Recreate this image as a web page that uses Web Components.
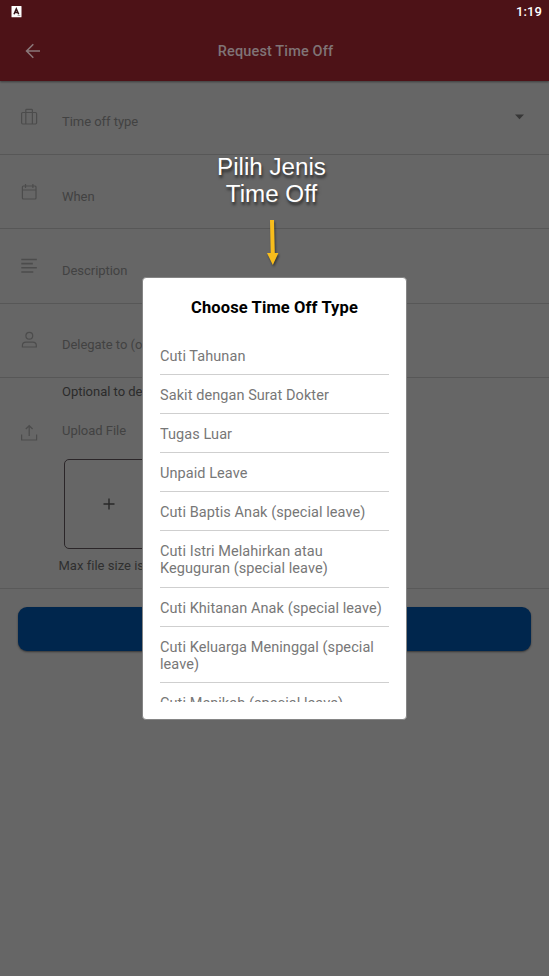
<!DOCTYPE html>
<html lang="id">
<head>
<meta charset="utf-8">
<title>Request Time Off</title>
<style>
html,body{margin:0;height:100%;overflow:hidden;background:#666}
body{font-family:Roboto,sans-serif}
</style>
</head>
<body>
<time-off-screen></time-off-screen>
<script>
const define=(name,html)=>{
  const t=document.createElement('template');
  t.innerHTML=html;
  customElements.define(name,class extends HTMLElement{
    constructor(){super();this.attachShadow({mode:'open'}).append(t.content.cloneNode(true));}
  });
};

define('app-header',`<style>
:host{display:flex;flex-direction:column;height:80.6px;background:#4d1217;color:#8a7779;box-shadow:0 1px 2px #0006;position:relative}
.status{display:flex;justify-content:space-between;height:22px;padding:1px 7px 0 11px;align-items:center;box-sizing:border-box;color:#fff;font-size:13px;font-weight:500;letter-spacing:.1px}
.bar{display:grid;grid-template-columns:66px 1fr 64px;height:58.6px;align-items:center}
.bar svg{margin-left:25px}
h1{margin:0;padding-top:1px;text-align:center;font-size:14.5px;font-weight:500;letter-spacing:.13px;color:#807476}
.status svg{display:block}
</style>
<div class="status"><svg width="11" height="12" viewBox="0 0 11 12"><rect x=".5" width="10" height="11.3" rx=".6" fill="#fff"/><path d="M3 8.2 5.3 2.9 7.7 8.2M3.8 6.5h3" fill="none" stroke="#36161a" stroke-width="1.5"/><path d="M6.5 9.5h2.8" stroke="#aaa"/></svg><span>1:19</span></div>
<div class="bar"><svg width="16" height="16" viewBox="0 0 16 16" fill="none" stroke="#8a7779" stroke-width="1.6"><path d="M15 8H2M8.3 1.3 1.6 8l6.7 6.7"/></svg><h1><slot></slot></h1></div>`);

define('form-row',`<style>
:host{display:grid;grid-template-columns:62px 1fr auto;height:74.35px;box-sizing:border-box;border-bottom:1px solid #575757;font-size:13px;color:#424242;letter-spacing:-.04px;align-items:center}
.icon{padding-left:20px;display:flex}
.label{padding-top:9px}
.end{padding-right:24px}
</style><span class="icon"><slot name="icon"></slot></span><span class="label"><slot></slot></span><span class="end"><slot name="end"></slot></span>`);

define('upload-section',`<style>
:host{display:flex;flex-direction:column;height:211px;box-sizing:border-box;border-bottom:1px solid #595959;font-size:13px;color:#424242;letter-spacing:-.02px;line-height:16px}
.hint{padding:6px 0 0 62px;color:#2b2b2b}
.head{display:grid;grid-template-columns:62px 1fr;height:34px;margin-top:14px;align-items:center}
.icon{padding:4px 0 0 20px;display:flex}
.head span:last-child{margin-top:3px;padding-bottom:2px}
.drop{margin:11px 0 0 64px;width:90px;height:90px;box-sizing:border-box;border:1px solid #2b2629;border-radius:5px;display:grid;place-items:center}
.note{padding:9px 0 0 58.5px;color:#2f2f2f;letter-spacing:.02px}
</style><div class="hint"><slot name="hint"></slot></div>
<div class="head"><span class="icon"><slot name="icon"></slot></span><span><slot></slot></span></div>
<div class="drop"><svg width="12" height="12" viewBox="0 0 12 12"><path d="M6 .5v11M.5 6h11" stroke="#292929" stroke-width="1.4"/></svg></div>
<div class="note"><slot name="note"></slot></div>`);

define('submit-button',`<style>
:host{display:block;margin:18px 18px 0;height:44px;border-radius:9px;background:#00264d;box-shadow:0 1px 2px #0007}
</style>`);

define('choice-item',`<style>
:host{display:block;flex:none;padding:12px 0 9.1px;border-bottom:1px solid #cfcfcf;line-height:17px;font-size:14.5px;color:#777;letter-spacing:.07px}
</style><slot></slot>`);

define('choice-dialog',`<style>
:host{position:absolute;left:142px;top:277px;width:265px;height:443px;box-sizing:border-box;display:flex;flex-direction:column;background:#fff;border:1px solid #858585;border-radius:4px;padding:0 17px 17px}
h2{margin:0;height:58px;line-height:59px;text-align:center;font-size:16.5px;letter-spacing:.12px;font-weight:700;color:#000;flex:none}
.list{display:flex;flex-direction:column;overflow:hidden;flex:1;min-height:0}
</style><h2><slot name="title"></slot></h2><div class="list"><slot></slot></div>`);

define('callout-note',`<style>
:host{position:absolute;left:201.5px;top:153px;width:140px;display:flex;flex-direction:column;align-items:center;font:24.2px/27px "Liberation Sans",sans-serif;color:#fff;text-align:center;text-shadow:1px 3px 3px #0009}
svg{margin:11px 0 0 1px;filter:drop-shadow(1px 2px 1px #0007)}
</style><div><slot></slot></div><svg width="14" height="48" viewBox="0 0 14 48"><path d="M5 2h4l.8 33h3.6L7.8 47 2 35h3.7z" fill="#f8bd1c"/></svg>`);

define('time-off-screen',`<style>
:host{display:flex;flex-direction:column;height:100vh;background:#666;position:relative;overflow:hidden}
svg{display:block}
.line{fill:none;stroke:#4c4c4c;stroke-width:1.2}
</style>
<app-header>Request Time Off</app-header>
<form-row>
<svg slot="icon" class="line" width="18" height="18" viewBox="0 0 18 18"><rect x="1.6" y="4.5" width="15" height="11.5" rx="1.2"/><path d="M5.8 16V2.2q0-.8.8-.8h5q.8 0 .8.8V16"/></svg>
Time off type
<svg slot="end" width="11" height="6" viewBox="0 0 11 6"><path d="M1 .5h9L5.5 5.3z" fill="#373737"/></svg></form-row>
<form-row><svg slot="icon" class="line" width="18" height="18" viewBox="0 0 18 18"><rect x="2.4" y="3" width="13.6" height="13" rx="1"/><path d="M2.4 7h13.6M5.5 1v4M12.9 1v4"/></svg>When</form-row>
<form-row><svg slot="icon" class="line" style="stroke-width:1.6" width="18" height="18" viewBox="0 0 18 18"><path d="M1.3 2.5h15.5M1.3 6.6h11.5M1.3 10.8h15.5M1.3 15h12"/></svg>Description</form-row>
<form-row><svg slot="icon" class="line" width="18" height="18" viewBox="0 0 18 18"><circle cx="9.3" cy="4.7" r="3.4"/><path d="M2.4 16v-1.6q0-3.2 3.6-3.2h6.7q3.6 0 3.6 3.2V16z"/></svg>Delegate to (o</form-row>
<upload-section><span slot="hint">Optional to de</span>
<svg slot="icon" class="line" width="18" height="18" viewBox="0 0 18 18"><path d="M1.6 10.5V16h15v-5.5M9.2 12V1.8M5.8 5l3.4-3.3L12.6 5"/></svg>Upload File<span slot="note">Max file size is</span></upload-section>
<submit-button></submit-button>
<callout-note>Pilih Jenis<br>Time Off</callout-note>
<choice-dialog><span slot="title">Choose Time Off Type</span>
<choice-item>Cuti Tahunan</choice-item>
<choice-item>Sakit dengan Surat Dokter</choice-item>
<choice-item>Tugas Luar</choice-item>
<choice-item>Unpaid Leave</choice-item>
<choice-item>Cuti Baptis Anak (special leave)</choice-item>
<choice-item>Cuti Istri Melahirkan atau Keguguran (special leave)</choice-item>
<choice-item>Cuti Khitanan Anak (special leave)</choice-item>
<choice-item>Cuti Keluarga Meninggal (special leave)</choice-item>
<choice-item>Cuti Menikah (special leave)</choice-item>
</choice-dialog>`);
</script>
</body>
</html>
